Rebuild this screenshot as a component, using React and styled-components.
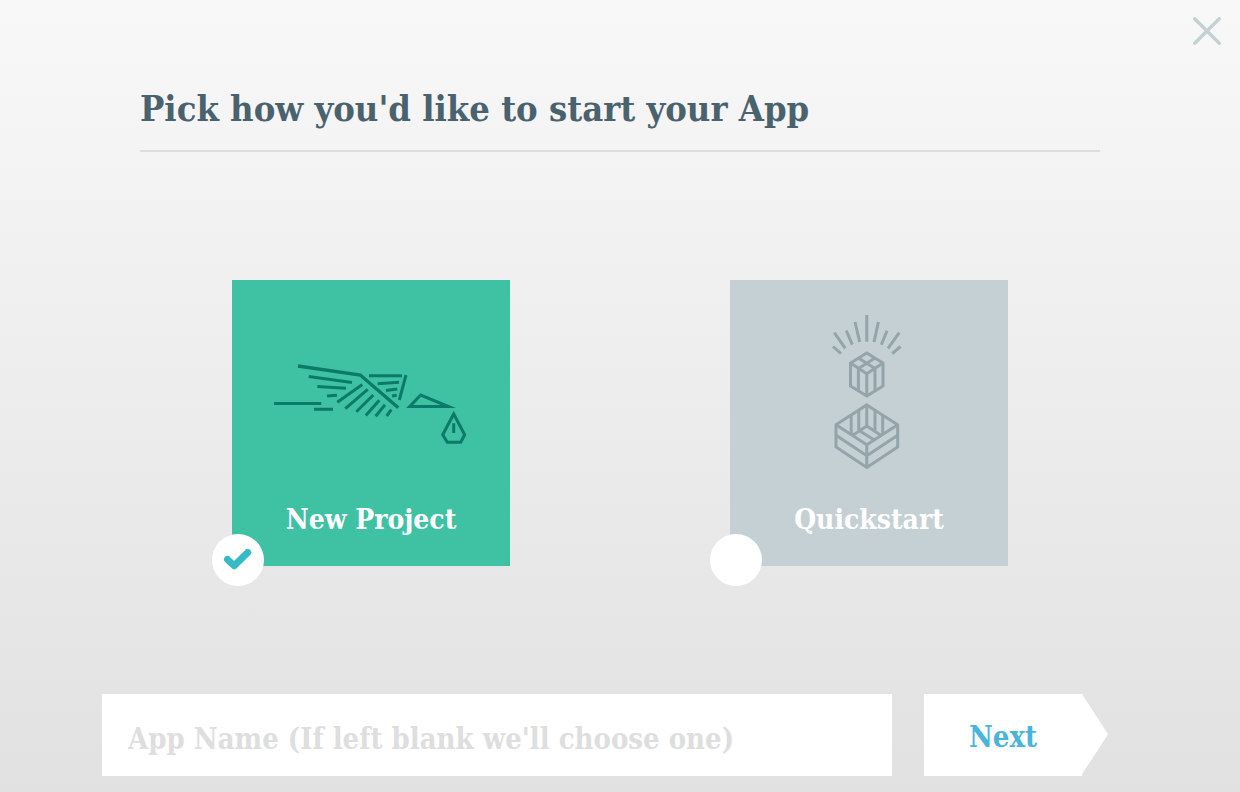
import React, { useState } from "react";
import styled, { createGlobalStyle } from "styled-components";

const GlobalStyle = createGlobalStyle`
  * {
    box-sizing: border-box;
  }
  body {
    margin: 0;
  }
  body, input, button {
    font-family: "DejaVu Serif Condensed", "DejaVu Serif", serif;
    font-stretch: condensed;
    font-weight: bold;
  }
`;

function BirdIcon() {
  return (
    <Drawing width="198" height="112" viewBox="0 -24 198 112" stroke="#0c7a68" aria-hidden="true">
      <path strokeWidth="3.4" d="M26 6L88.3 15L126.3 47.7" />
      <path d="M36.7 16.5L80 22.6M45.3 26.4L74 28.3M55 36L65 35.2M2 43.4H49.3M42 49.2H61" />
      <path d="M65.3 42.3L90.3 24.5M73.3 48.6L95.7 29.3M84.3 51.7L101.3 35M93.8 55.6L107.3 40.2M103.7 56.3L113 44.7M114.7 56L119.3 49.7" />
      <path d="M97 15.8H130M134 15L127.3 40M105.7 23.7L127 22.3M114 30.6L125.3 29M120 36L124.7 35.3" />
      <path d="M137.7 46.5L148.7 35L176.5 46.5Z" strokeMiterlimit="10" />
      <path d="M181.7 54L192.7 74.7L188.7 82.3H175.3L170.7 74.7ZM181.7 63.3V73" />
    </Drawing>
  );
}

function CubesIcon() {
  return (
    <Drawing width="78" height="158" viewBox="0 0 78 158" stroke="#94a4ab" aria-hidden="true">
      <path d="M36.8 2V28.7M25 9L29.7 29M48.4 9L44 29M16.3 17.7L22.3 31.7M57 17.7L51.3 31.7M4.3 19.7L15.3 35.3M69.3 19.7L58 35.3M3 33.5L11 40.7M70.5 33.5L62.3 40.7" />
      <path d="M36.8 39.9L53 50V73L36.8 83L20.5 73V50Z" />
      <path d="M20.5 50L36.8 60.8L53 50M36.8 60.8V83M28.4 45L45 55.5V77.7M45 45L28.4 55.5V77.7" />
      <path d="M36.8 91.9L67.7 111.7V134L36.8 154.5L6 134V111.7Z" />
      <path d="M6 111.7L36.8 131.7L67.7 111.7M36.8 131.7V154.5M6 122.3L36.8 142.8L67.7 122.3" />
      <path d="M36.8 91.9V113M22 122.8L36.8 113L51.5 122.8M21.2 102V121M28.8 97V117M45 97V117M52.7 102V121M29.5 117.7L44.3 127" />
    </Drawing>
  );
}

const starters = [
  { id: "new", label: "New Project", color: "#3fc1a4", Icon: BirdIcon },
  { id: "quickstart", label: "Quickstart", color: "#c5d0d4", Icon: CubesIcon },
];

export default function App() {
  const [selected, setSelected] = useState("new");

  return (
    <Page onSubmit={(e) => e.preventDefault()}>
      <GlobalStyle />
      <TopBar>
        <CloseButton type="button" aria-label="Close">
          <svg width="30" height="30" viewBox="0 0 30 30" fill="none" stroke="#c5d0d4" strokeWidth="3.4">
            <path d="M2.7 2.7L27.3 27.3M27.3 2.7L2.7 27.3" strokeLinecap="round" />
          </svg>
        </CloseButton>
      </TopBar>
      <Header>
        <Title>Pick how you'd like to start your App</Title>
      </Header>
      <Choices>
        {starters.map(({ id, label, color, Icon }) => (
          <Card key={id} $color={color}>
            <Picture>
              <Icon />
            </Picture>
            <CardLabel>{label}</CardLabel>
            <Radio
              type="radio"
              name="starter"
              value={id}
              checked={selected === id}
              onChange={() => setSelected(id)}
            />
            {selected === id && (
              <Check viewBox="0 0 52 52" aria-hidden="true">
                <path d="M15.5 25.5L22.2 31.8L35.7 18.5" />
              </Check>
            )}
          </Card>
        ))}
      </Choices>
      <Footer>
        <NameInput
          type="text"
          aria-label="App Name"
          placeholder="App Name (If left blank we'll choose one)"
        />
        <NextButton type="submit">Next</NextButton>
      </Footer>
    </Page>
  );
}

const Page = styled.form`
  display: flex;
  flex-direction: column;
  min-height: 100vh;
  background: linear-gradient(#f8f8f8, #e1e1e1);
`;

const TopBar = styled.div`
  display: flex;
  justify-content: flex-end;
  padding: 16px 18px 0;
`;

const CloseButton = styled.button`
  display: flex;
  padding: 0;
  border: none;
  background: none;
  cursor: pointer;
`;

const Header = styled.header`
  margin: 38px 140px 0;
  padding-bottom: 18px;
  border-bottom: 2px solid #dcdcdc;
`;

const Title = styled.h1`
  margin: 0;
  color: #4a626e;
  font-size: 36px;
  line-height: 48px;
  white-space: nowrap;
`;

const Choices = styled.main`
  display: flex;
  flex: 1;
  align-items: center;
  justify-content: center;
  gap: 220px;
`;

const Card = styled.label`
  position: relative;
  display: flex;
  flex-direction: column;
  align-items: center;
  width: 278px;
  padding: 32px 0 26px;
  background: ${(props) => props.$color};
  cursor: pointer;
`;

const Picture = styled.div`
  display: flex;
  align-items: center;
  justify-content: center;
  width: 100%;
  height: 160px;
  margin-bottom: 28px;
`;

const Drawing = styled.svg`
  fill: none;
  stroke-width: 3;
`;

const CardLabel = styled.span`
  color: #fff;
  font-size: 28px;
  line-height: 40px;
`;

const Radio = styled.input`
  position: absolute;
  left: -20px;
  bottom: -20px;
  width: 52px;
  height: 52px;
  margin: 0;
  appearance: none;
  border-radius: 50%;
  background: #fff;
  cursor: pointer;
`;

const Check = styled.svg`
  position: absolute;
  left: -20px;
  bottom: -20px;
  width: 52px;
  height: 52px;
  fill: none;
  stroke: #36bac6;
  stroke-width: 7;
  stroke-linecap: round;
  stroke-linejoin: round;
  pointer-events: none;
`;

const Footer = styled.footer`
  display: flex;
  gap: 32px;
  padding: 0 132px 16px 102px;
`;

const NameInput = styled.input`
  flex: 1;
  min-width: 0;
  height: 82px;
  padding: 8px 26px 0;
  border: none;
  border-radius: 0;
  outline: none;
  background: #fff;
  color: #4a626e;
  font-size: 29px;
  &::placeholder {
    color: #dedede;
    opacity: 1;
  }
`;

const NextButton = styled.button`
  width: 184px;
  height: 82px;
  padding: 4px 26px 0 0;
  border: none;
  background: #fff;
  clip-path: polygon(0 0, 158px 0, 100% 49%, 158px 98%, 158px 100%, 0 100%);
  color: #48b5da;
  font-size: 29px;
  cursor: pointer;
`;
